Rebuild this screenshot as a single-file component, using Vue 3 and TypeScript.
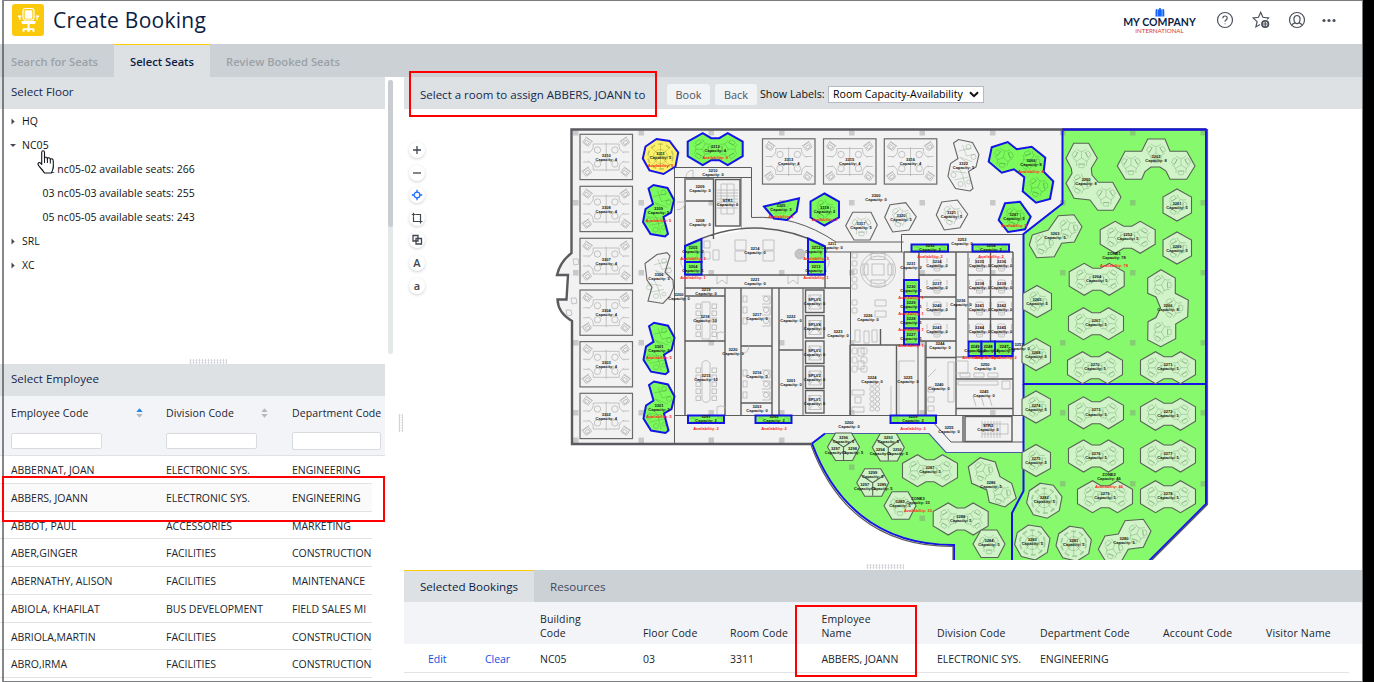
<script setup lang="ts">
interface Label { x: number; y: number; n: string; cap: string; av?: string; zone?: boolean }
type Kind = 'open' | 'free' | 'picked' | 'zoned'
interface Shape { kind: Kind; pts: string }

const tree = [
  { name: 'HQ', open: false, floors: [] as string[] },
  { name: 'NC05', open: true, floors: ['02 nc05-02 available seats: 266', '03 nc05-03 available seats: 255', '05 nc05-05 available seats: 243'] },
  { name: 'SRL', open: false, floors: [] as string[] },
  { name: 'XC', open: false, floors: [] as string[] },
]

const employees = [
  ['ABBERNAT, JOAN', 'ELECTRONIC SYS.', 'ENGINEERING'],
  ['ABBERS, JOANN', 'ELECTRONIC SYS.', 'ENGINEERING'],
  ['ABBOT, PAUL', 'ACCESSORIES', 'MARKETING'],
  ['ABER,GINGER', 'FACILITIES', 'CONSTRUCTION'],
  ['ABERNATHY, ALISON', 'FACILITIES', 'MAINTENANCE'],
  ['ABIOLA, KHAFILAT', 'BUS DEVELOPMENT', 'FIELD SALES MI'],
  ['ABRIOLA,MARTIN', 'FACILITIES', 'CONSTRUCTION'],
  ['ABRO,IRMA', 'FACILITIES', 'CONSTRUCTION'],
]

const bookingCols = ['', '', 'Building Code', 'Floor Code', 'Room Code', 'Employee Name', 'Division Code', 'Department Code', 'Account Code', 'Visitor Name']
const booking = ['Edit', 'Clear', 'NC05', '03', '3311', 'ABBERS, JOANN', 'ELECTRONIC SYS.', 'ENGINEERING', '', '']

/* Room outlines are stored as offsets so that one template serves many rooms. */
const at = (t: number[][], x: number, y: number): string =>
  t.map(p => `${(x + p[0]).toFixed(1)},${(y + p[1]).toFixed(1)}`).join(' ')

const DBL = [[-27.5, -7.5], [-12.5, -16], [-4, -11], [4, -11], [12.5, -16], [27.5, -7.5], [27.5, 7], [12.5, 16], [4, 11], [-4, 11], [-12.5, 16], [-27.5, 7]]
const HEX = [[0, -16], [14.5, -8], [14.5, 8], [0, 16], [-14, 8], [-14, -8]]
const FLAT = [[-8, -14], [8, -14], [16, 0], [9, 13.5], [-8, 13.5], [-16, 0]]
const OCT = [[-4, -17.5], [9, -15.5], [17.7, -4], [15, 10], [3, 17.5], [-11, 14], [-17.7, 2], [-15, -10]]
const BEAN = [[-10, -22], [-5, -25.5], [9, -22.5], [15.5, -10.5], [12.5, 2], [5, 6.5], [9.5, 23.5], [6.5, 26], [-8, 23.5], [-15.5, 11.5], [-13, -1.5], [-5.5, -6.5]]

const dbl: [Kind, number, number, string, string][] = [
  ['free', 715.2, 149.2, '3312', '4'],
  ['zoned', 1127.7, 237.3, '3252', '5'], ['zoned', 1096.7, 279.3, '3264', '5'], ['zoned', 1096, 323.7, '3267', '5'],
  ['zoned', 1095, 367.7, '3270', '5'], ['zoned', 1168, 367.7, '3271', '5'], ['zoned', 1096, 412.8, '3273', '5'],
  ['zoned', 1168, 414.3, '3272', '5'], ['zoned', 1096, 456, '3276', '5'], ['zoned', 1168, 456, '3277', '5'],
  ['zoned', 1105, 496.7, '3279', '5'], ['zoned', 1168, 496.7, '3278', '5'], ['zoned', 930, 470.7, '3287', '5'], ['zoned', 960.7, 519, '3288', '5'],
]
const hex: [Kind, number, number, string, string][] = [
  ['free', 824.5, 209.5, '3318', '2'], ['zoned', 1177, 205, '3261', '5'], ['zoned', 1177, 248, '3269', '5'],
  ['zoned', 1037, 301.5, '3265', '5'], ['zoned', 1036, 354.5, '3268', '5'], ['zoned', 1036, 407, '3274', '5'], ['zoned', 1036, 460.5, '3275', '5'],
]
const flat: [number, number, string][] = [[900, 505.7, '3285'], [989, 544, '3284']]
const split: [number, number, string[]][] = [
  [843.5, 447, ['3296', '3297', '3298']], [888.3, 447.5, ['3293', '3294', '3292']], [872.7, 482.7, ['3299', '3297', '3289']],
]
const oct: [Kind, number, number, string][] = [['picked', 660.5, 156.5, '3311'], ['zoned', 1044.3, 500.7, '3282'], ['zoned', 1032.3, 542.5, '3283'], ['zoned', 1073.7, 543.7, '3281']]
const bean: [Kind, number, number, string, string][] = [
  ['free', 658.5, 210.5, '3309', '5'], ['open', 963.5, 165, '3322', '5'], ['free', 659, 348.2, '3301', '5'], ['free', 659, 407, '3301', '5'],
]
const quads: [number, number, string][] = [
  [606.2, 157, '3310'], [606.2, 209, '3308'], [606.2, 261, '3307'], [606.2, 312.7, '3304'], [606.2, 364.3, '3303'], [606.2, 416, '3302'],
  [788.7, 161.5, '3313'], [849.7, 161.5, '3315'], [910.5, 161.5, '3316'],
]

const custom: Shape[] = [
  { kind: 'open', pts: '645,263.5 657,254.5 667,252.7 670,256 665,272 673,280 673.5,288 670,296 663,303.5 648,301 652,287 647,280' },
  { kind: 'free', pts: '764,206.5 799,198.2 796.7,211.5 787,220 774,218.5' },
  { kind: 'open', pts: '852.7,212.3 871,212.3 877.3,225 870,240 854,240 845.7,225.7' },
  { kind: 'open', pts: '890,204.7 905.7,202.7 916.3,216.7 909,230 892.7,232 884.7,217.3' },
  { kind: 'open', pts: '941.7,202 957.3,200 967.7,214.3 960,227.7 944.3,230 936.3,215' },
  { kind: 'free', pts: '991.7,147.3 1007.7,142 1016.7,149.3 1031.7,146.7 1045.3,157.7 1043.7,171.7 1053.3,181.3 1050,199 1036,202.7 1022.7,191.3 1024.3,177.3 1014,169.3 1001.7,172.7 988.7,161.7' },
  { kind: 'free', pts: '1005,203.3 1020,201.7 1030.7,216.7 1025,229.3 1008,232 998.7,220' },
  { kind: 'zoned', pts: '1073.7,143.3 1088.7,143.3 1097.3,158.3 1091.3,168.3 1092,175 1098.3,182.3 1112.7,182.3 1121,197.3 1113.3,210.3 1097.7,210.3 1090,200 1074,198.3 1066,183.3 1072,173.3 1071.3,168.3 1066,158.3' },
  { kind: 'zoned', pts: '1125,151.3 1141.7,151.3 1147.7,139 1165,139 1170,151.3 1186.7,151.3 1195,166 1186.7,179.3 1170,179.3 1166,171 1160,167 1151,167 1145,171.5 1141.7,179.3 1125.3,179.3 1117.3,166' },
  { kind: 'zoned', pts: '1032.3,235 1048.3,230 1058.3,215.7 1074,214.7 1082,226.7 1074.3,242 1061.7,243.3 1054.3,256.7 1036.7,257.7 1029.3,245' },
  { kind: 'zoned', pts: '1161,269.7 1175.3,278 1175.3,293.3 1188.3,300 1187.7,316.7 1175.7,324 1175.7,338.7 1160.7,346.7 1147.7,340 1148,321.7 1156,317.5 1160.5,308 1156,297 1147.7,293.3 1147.7,278' },
  { kind: 'zoned', pts: '968.3,466.7 980,457.7 995.3,462 1000,476.7 1011.7,483.3 1016.3,498.3 1005,507 989.3,502.3 986.7,490 971.7,483.3' },
  { kind: 'zoned', pts: '1105,536 1118.3,534 1125,520.7 1143.3,519.3 1151,531 1143.3,547.3 1128.3,549.3 1121,562 1106,562 1098.3,549.3' },
  { kind: 'free', pts: '685,246 701.5,239 701.5,262 685,262' },
  { kind: 'free', pts: '808,238.5 825,246.5 825,262 808,262' },
]
const boxes: [number, number, number, number][] = [
  [685, 262, 16.5, 12.5], [808, 262, 17, 12.5],
  [688, 415.5, 36, 7.5], [755.5, 415.5, 36, 7.5], [890.5, 415.5, 45.5, 7.5],
  [911.5, 244.5, 36.5, 7], [972.5, 244.5, 36.5, 7],
  [904, 280, 15, 16], [904, 296, 15, 16], [904, 312, 15, 16.5], [904, 328.5, 15, 16],
  [968.5, 341.5, 13, 14.5], [981.5, 341.5, 13.5, 14.5], [995, 341.5, 17.5, 14.5],
]

const shapes: Shape[] = [
  ...custom,
  ...dbl.map(([kind, x, y]) => ({ kind, pts: at(DBL, x, y) })),
  ...hex.map(([kind, x, y]) => ({ kind, pts: at(HEX, x, y) })),
  ...flat.map(([x, y]) => ({ kind: 'zoned' as Kind, pts: at(FLAT, x, y) })),
  ...split.map(([x, y]) => ({ kind: 'zoned' as Kind, pts: at(FLAT, x, y) })),
  ...oct.map(([kind, x, y]) => ({ kind, pts: at(OCT, x, y) })),
  ...bean.map(([kind, x, y]) => ({ kind, pts: at(BEAN, x, y) })),
]
const rank: Record<Kind, number> = { open: 0, zoned: 1, free: 2, picked: 3 }
shapes.sort((a, b) => rank[a.kind] - rank[b.kind])

/* Furniture clusters of three seats inside irregular rooms: x, y, rotation. */
const pods: [number, number, number][] = [
  [861.5, 226, 0], [900.5, 217, 20], [952, 215, 20], [1014.5, 217, 20], [824.5, 209.5, 30],
  [1003.5, 157.5, 10], [1030, 160.5, 40], [1038, 187, 20],
  [1081.5, 158, 0], [1081, 184, 30], [1106, 196.5, 0],
  [1131, 165, 0], [1156, 153, 0], [1181, 165, 0], [1043.5, 244, 20], [1068, 229, 20],
  [1161.5, 285, 30], [1173, 308, 30], [1161.5, 332, 30],
  [983, 471, 20], [1001, 494, 20], [1113, 549, 20], [1137, 534, 20],
  ...hex.slice(1).map(([, x, y]) => [x, y, 30] as [number, number, number]),
  ...flat.map(([x, y]) => [x, y, 0] as [number, number, number]),
  ...dbl.flatMap(([, x, y]) => [[x - 13, y, 30], [x + 13, y, 90]] as [number, number, number][]),
]

const offices: [number, number][] = []
for (const y of [264, 286, 308, 330]) for (const x of [937, 979.5, 1001.5]) offices.push([x, y])

const pillars: [number, number][] = []
for (const x of [573, 638.5, 708.5, 779, 849, 919.5, 990, 1060, 1130, 1200.5])
  for (const y of [132.5, 202.5, 272.5, 342.5, 412.5]) pillars.push([x, y])
for (const x of [1060, 1130, 1200.5]) pillars.push([x, 483.5])
for (const x of [573, 638.5, 708.5, 779]) pillars.push([x, 440])
pillars.push([849, 467], [919.5, 518])

const lifts = [290, 315.5, 341, 366, 390.5]

const labels: Label[] = [
  ...quads.map(([x, y, n]) => ({ x, y, n, cap: '4' })),
  ...dbl.map(([k, x, y, n, cap]) => ({ x, y: y - 1, n, cap, av: k === 'free' ? '6' : undefined })),
  ...hex.map(([k, x, y, n, cap]) => ({ x, y, n, cap, av: k === 'free' ? '2' : undefined })),
  ...flat.map(([x, y, n]) => ({ x, y: y - 2, n, cap: '5' })),
  ...split.flatMap(([x, y, n]) => [{ x, y: y - 8, n: n[0], cap: '5' }, { x: x - 8, y: y + 3.5, n: n[1], cap: '5' }, { x: x + 9, y: y + 3.5, n: n[2], cap: '5' }]),
  ...oct.map(([k, x, y, n]) => ({ x, y: y - 1, n, cap: '5', av: k === 'picked' ? '5' : undefined })),
  ...bean.map(([k, x, y, n, cap]) => ({ x, y, n, cap, av: k === 'free' ? '5' : undefined })),
  { x: 659, y: 276, n: '3306', cap: '5' }, { x: 781, y: 207, n: '3305', cap: '5', av: '1' },
  { x: 861, y: 225, n: '3317', cap: '5' }, { x: 901, y: 217, n: '3320', cap: '5' }, { x: 951.5, y: 214, n: '3321', cap: '5' },
  { x: 1031, y: 162, n: '3266', cap: '8', av: '8' }, { x: 1014, y: 216, n: '3267', cap: '5', av: '5' },
  { x: 1086, y: 181, n: '3260', cap: '8' }, { x: 1156, y: 158, n: '3262', cap: '8' }, { x: 1055, y: 235, n: '3263', cap: '5' },
  { x: 1168, y: 307, n: '3266', cap: '8' }, { x: 991, y: 484, n: '3286', cap: '5' }, { x: 1124, y: 540, n: '3280', cap: '5' },
  { x: 713, y: 172, n: '3210', cap: '0' }, { x: 700, y: 188, n: '3209', cap: '0' }, { x: 700, y: 222, n: '3208', cap: '0' },
  { x: 727.5, y: 202, n: 'STR1', cap: '0' }, { x: 876, y: 197, n: '3300', cap: '0' }, { x: 832, y: 245.5, n: '3211', cap: '0' },
  { x: 693, y: 249, n: '3205', cap: '2', av: '2' }, { x: 693, y: 268, n: '3204', cap: '1', av: '1' },
  { x: 816, y: 249, n: '3212', cap: '2', av: '2' }, { x: 816, y: 268, n: '3213', cap: '1', av: '1' },
  { x: 755, y: 250, n: '3214', cap: '0' }, { x: 755, y: 281, n: '3221', cap: '0' }, { x: 679, y: 296, n: '3200', cap: '0' },
  { x: 706, y: 291, n: '3219', cap: '0' }, { x: 705, y: 318, n: '3218', cap: '10' }, { x: 706, y: 377, n: '3215', cap: '12' },
  { x: 733, y: 351, n: '3220', cap: '0' }, { x: 757, y: 316, n: '3217', cap: '0' }, { x: 757, y: 374, n: '3216', cap: '0' },
  { x: 757, y: 408, n: '3203', cap: '0' }, { x: 791, y: 318, n: '3222', cap: '0' }, { x: 791, y: 382, n: '3201', cap: '0' },
  ...lifts.map((y, i) => ({ x: 814.5, y: y + 11, n: `SPLV${5 - i}`, cap: '0' })),
  { x: 838, y: 333, n: '3223', cap: '0' }, { x: 868, y: 317, n: '3226', cap: '0' }, { x: 872, y: 379, n: '3224', cap: '0' },
  { x: 908, y: 379, n: '3225', cap: '0' }, { x: 849, y: 424, n: '3200', cap: '0' }, { x: 940, y: 345, n: '3244', cap: '0' },
  { x: 939, y: 386, n: '3240', cap: '0' }, { x: 985, y: 366, n: '3250', cap: '0' }, { x: 984, y: 393, n: '3245', cap: '0' },
  { x: 949, y: 429, n: '3255', cap: '0' }, { x: 988, y: 427, n: 'STR2', cap: '0' }, { x: 961, y: 302, n: '3236', cap: '0' },
  { x: 911, y: 265, n: '3231', cap: '2' }, { x: 962, y: 241.5, n: '3253', cap: '0' }, { x: 1019, y: 346, n: '3251', cap: '0' },
  ...offices.map(([x, y], i) => ({ x, y: y - 1, n: String(3234 + i), cap: '0' })),
  ...[288, 304, 320, 336].map((y, i) => ({ x: 911, y, n: String(3230 - i), cap: '1', av: '1' })),
  { x: 930, y: 247, n: '3232', cap: '2', av: '2' }, { x: 991, y: 247, n: '3254', cap: '2', av: '2' },
  { x: 706, y: 418.5, n: '3291', cap: '2', av: '2' }, { x: 774, y: 418.5, n: '3292', cap: '2', av: '2' }, { x: 913, y: 418.5, n: '3229', cap: '2', av: '2' },
  { x: 975, y: 348, n: '3249', cap: '2', av: '2' }, { x: 988, y: 348, n: '3248', cap: '2', av: '2' }, { x: 1004, y: 348, n: '3247', cap: '2', av: '2' },
  { x: 1114, y: 255.5, n: 'ZONE1', cap: '78', av: '78', zone: true },
  { x: 1109, y: 476.5, n: 'ZONE2', cap: '46', av: '46', zone: true },
  { x: 918, y: 500.5, n: 'ZONE3', cap: '33', av: '33', zone: true },
]

const tools = ['plus', 'minus', 'locate', 'area', 'layers', 'big', 'small']
</script>

<template>
  <div class="screen">
    <div class="app">
      <header class="top">
        <svg class="logo" viewBox="0 0 32 32">
          <rect width="32" height="32" rx="3" fill="#fbc90c" />
          <rect x="11" y="4.500" width="11" height="11.500" rx="2.500" fill="none" stroke="#fff" stroke-width="1.200" />
          <rect x="12.700" y="6.300" width="7.600" height="8.500" rx="1.200" fill="#fff" />
          <path d="M6 11.500h3.300v1.300h-.8v3.200H7.300v-2.700H6zM27 11.500h-3.300v1.300h.8v3.200h1.200v-2.700H27z" fill="#fff" />
          <path d="M9.500 17h14v2.200l-1 .8H10.500l-1-.8z" fill="#fff" />
          <path d="M15.500 20h2v4.300h4l1 1v2.500h-2V26h-2.700v1.800h-2.600V26h-2.700v1.800h-2v-2.500l1-1h4z" fill="#fff" />
        </svg>
        <h1>Create Booking</h1>
        <div class="brand">
          <svg width="10" height="9" viewBox="0 0 10 9">
            <path d="M.500 2.500h2V8.500h-2zM3 1.500h3.800v7H3zM7.300 2.500h2v6h-2z" fill="#1463ff" />
            <circle cx="5" cy="1.100" r="1.100" fill="#1463ff" /><circle cx="1.700" cy="2" r="1" fill="#1463ff" /><circle cx="8.200" cy="2" r="1" fill="#1463ff" />
            <path d="M2.700 3v5.500M7.100 3v5.500" stroke="#4f86ff" stroke-width=".5" />
          </svg>
          <b>MY COMPANY</b>
          <span>INTERNATIONAL</span>
        </div>
        <nav class="icons">
          <svg viewBox="0 0 18 18"><circle cx="9" cy="9" r="7.500" /><path d="M6.800 7.300Q6.800 5 9 5t2.200 2q0 1.200-1.200 2-1 .700-1 1.800" /><circle cx="9" cy="12.800" r=".5" class="dot" /></svg>
          <svg viewBox="0 0 18 18"><path d="M15.300 8.300l1.200-1.400-5.600-.6L8.700 1.300 6.500 6.300l-5.400.6 4 3.700-1.200 5.300 4.100-2.300" /><circle cx="13.200" cy="13" r="3.200" stroke-width="1.800" /><path d="M13.200 11v4M11.200 13h4" stroke-width="1.200" /></svg>
          <svg viewBox="0 0 18 18"><circle cx="9" cy="9" r="7.500" /><path d="M4 14.200q.5-1.700 3-2.400Q5.800 10 5.900 7.700 6.200 4.500 9 4.500t3.100 3.200Q12.200 10 11 11.800q2.500.7 3 2.400M7 11.800q2 1.800 4 0" /></svg>
          <svg viewBox="0 0 18 18"><circle cx="4" cy="9.500" r="1.600" class="dot" /><circle cx="9" cy="9.500" r="1.600" class="dot" /><circle cx="14" cy="9.500" r="1.600" class="dot" /></svg>
        </nav>
      </header>

      <div class="tabs">
        <div class="tab first">Search for Seats</div>
        <div class="tab active">Select Seats</div>
        <div class="tab last">Review Booked Seats</div>
      </div>

      <main class="body">
        <section class="left">
          <div class="floors">
            <div class="floors-main">
              <div class="bar">Select Floor</div>
              <ul class="tree">
                <template v-for="b in tree" :key="b.name">
                  <li class="node">
                    <svg width="7" height="7" viewBox="0 0 7 7"><path :d="b.open ? 'M0 2h6L3 5z' : 'M1.500.5v6l3.200-3z'" fill="#444b55" /></svg>
                    {{ b.name }}
                  </li>
                  <li v-for="f in b.floors" :key="f" class="leaf">{{ f }}</li>
                </template>
              </ul>
            </div>
            <div class="scroll"><div class="thumb"></div></div>
          </div>
          <div class="grip-row"><i class="grip h"></i></div>
          <div class="emp">
            <div class="bar">Select Employee</div>
            <div class="emp-head">
              <div>
                <span class="cap">Employee Code
                  <svg class="sort" width="7" height="10" viewBox="0 0 7 10"><path d="M.3 4L3.500.3 6.700 4z" fill="#1e88ee" /><path d="M.3 6L3.500 9.700 6.700 6z" fill="#b5b9be" /></svg>
                </span>
                <input class="filter" type="text" />
              </div>
              <div>
                <span class="cap">Division Code
                  <svg class="sort two" width="7" height="10" viewBox="0 0 7 10"><path d="M.3 4L3.500.3 6.700 4z" fill="#b5b9be" /><path d="M.3 6L3.500 9.700 6.700 6z" fill="#b5b9be" /></svg>
                </span>
                <input class="filter" type="text" />
              </div>
              <div>
                <span class="cap">Department Code</span>
                <input class="filter tall" type="text" />
              </div>
            </div>
            <div class="rows">
              <div v-for="(e, i) in employees" :key="e[0]" class="row" :class="{ hover: i === 1 }">
                <span v-for="c in e" :key="c">{{ c }}</span>
              </div>
            </div>
          </div>
        </section>

        <div class="divider"><i class="grip v"></i></div>

        <section class="right">
          <div class="bar tools-bar">
            <span class="prompt">Select a room to assign ABBERS, JOANN to</span>
            <button>Book</button>
            <button>Back</button>
            <label>Show Labels:</label>
            <div class="select">
              <span>Room Capacity-Availability</span>
              <svg width="10" height="7" viewBox="0 0 10 7"><path d="M1 1.200L5 5.200 9 1.200" fill="none" stroke="#111" stroke-width="2" /></svg>
            </div>
          </div>

          <div class="map">
            <div class="zoomers">
              <div v-for="t in tools" :key="t" class="zoomer">
                <svg v-if="t === 'plus'" viewBox="0 0 12 12"><path d="M6 2v8M2 6h8" /></svg>
                <svg v-else-if="t === 'minus'" viewBox="0 0 12 12"><path d="M2 6h8" /></svg>
                <svg v-else-if="t === 'locate'" viewBox="0 0 12 12" class="blue"><circle cx="6" cy="6" r="2.900" /><path d="M6 .8v2.500M6 8.700v2.500M.8 6h2.500M8.700 6h2.500" /></svg>
                <svg v-else-if="t === 'area'" viewBox="0 0 12 12"><path d="M2.500 4.200V9.500H8M4.200 2.500H9.500V8M.800 2.500H4M2.500.8V4M8 9.500h3.500M9.500 7.500v4" stroke-width="1.200" /></svg>
                <svg v-else-if="t === 'layers'" viewBox="0 0 12 12"><path d="M2 1.500h5v5.500H2zM5 4.500h5.500V10H5z" stroke-width="1.300" /></svg>
                <b v-else>{{ t === 'big' ? 'A' : 'a' }}</b>
              </div>
            </div>
            <svg class="plan" viewBox="404 109 958 451" width="958" height="451">
              <defs>
                <g id="quad">
                  <rect x="-26.200" y="-22.700" width="52.500" height="45.300" class="room" />
                  <path d="M0-14.500V14.500M-13-13H13M-13 13H13M-13-13Q-12-7-18-4M13-13Q12-7 18-4M-13 13Q-12 7-18 4M13 13Q12 7 18 4M-23-5h6M-23 5h6M17-5h6M17 5h6" />
                  <g v-for="s in [[-1, -1], [1, -1], [-1, 1], [1, 1]]" :key="s.join()">
                    <circle :cx="8.700 * s[0]" :cy="7 * s[1]" r="3.200" />
                    <g :transform="`translate(${19 * s[0]} ${15 * s[1]}) rotate(${35 * s[0] * s[1]})`"><rect x="-3.500" y="-3" width="7" height="6" rx="1" /><path d="M-4.500-3.500h9M-2-1h4v3h-4z" /></g>
                  </g>
                </g>
                <g id="pod">
                  <path d="M0 0V-6M0 0L5.500 3.500M0 0L-5.500 3.500M-5-9Q0-4 5-9M9 0Q4 2 5 8M-9 0Q-4 2-5 8" />
                  <g v-for="a in [60, 180, 300]" :key="a" :transform="`rotate(${a}) translate(0 -8)`"><rect x="-2.700" y="-1.700" width="5.400" height="3.600" rx="1.200" /><path d="M-3.500 2h7" /></g>
                </g>
                <g id="wheel">
                  <path d="M0-12V12M-12 0H12M-9-9L9 9M-9 9L9-9" />
                  <circle r="7" /><circle r="12.500" stroke-dasharray="5 3" stroke-width="1.600" />
                </g>
                <g id="wave">
                  <path d="M-5-14L8-17M-4-8L9-3M-1-20L3-9L12-11M-12 6L3 8M-9 15L5 12M-5 2L-1 10L2 22M4-2L-3-7" />
                  <circle cx="5" cy="-18" r="2.500" /><circle cx="10" cy="-8" r="2.500" /><circle cx="-10" cy="10" r="2.500" /><circle cx="-3" cy="19" r="2.500" /><circle cx="5" cy="17" r="2" />
                </g>
                <g id="desk"><path d="M-10 3H-4Q0 7 4 3H10M-10-6v5M10-6v5" /><rect x="-4" y="-6" width="8" height="7" rx="2" /><rect x="-3" y="3" width="6" height="4" rx="1" /></g>
              </defs>

              <path class="slab" d="M571.500 129.500H1206V504L1148 562H954V545C875 545 833 500 812 444H572V321Q558 313 557.500 299.500H566.500L568 275H557Q560 262 571.500 253Z" />
              <path class="zone-fill" d="M1062 129.500H1206V504L1148 562H954V545C875 545 833 500 812 443.500L825 433.500H929L946 452.500H1023.500V234L1062 203.500Z" />
              <rect v-for="(p, i) in pillars" :key="i" :x="p[0]" :y="p[1] - 2.500" width="5.500" height="5.500" class="pillar" />

              <g class="wall thin">
                <path d="M674.500 167.500H751.500V217.500Q796 215 836 242H903.500M674.500 167.500V444M674.500 177.500H751.500M825 252H903.500M901.500 252V234.500H1023M674.500 415.500H1023.500M927 415.500L951 442H1023.500M803 288V415M741 178V228M968 253V341M956 357H1013M918 345V415M850.500 252V415M925 345V415" />
              </g>
              <path d="M713.500 226H741V231Q725 233 713.500 237Z" fill="#fff" />
              <g class="wall">
                <path d="M685 178V415M685 246Q755 210 825 246V275H685M686 179H713.500V239M686 201H713.500M685 288H850M725 288V415M685 296H725M685 341H725M741 288V415M772 288V415M741 346H772M741 403H772M779 288V415M779 350H803M825 288V252M850 345H920M850 345V415M896.500 345V415M904 252V345M919 252V341M956 252V415M926 341V415M919 341H956M926 357.500H956M1013 252V415M990.500 252V341M904 252H1013M919 275H956M919 297H956M919 319H956M968 275H1013M968 297H1013M968 319H1013M956 379H1013M956 408.500H1013M880.500 329V345M963 415V442" />
                <rect x="715.500" y="179.500" width="24.500" height="46.500" /><rect x="965" y="416.500" width="47" height="25" />
                <rect v-for="y in lifts" :key="y" x="805.500" :y="y" width="18.500" height="22.500" />
              </g>

              <g class="furn">
                <use v-for="q in quads" :key="`${q[0]}-${q[1]}`" href="#quad" :x="q[0]" :y="q[1]" />
                <path d="M717 190H738M717 193H738M717 196H738M717 199H738M717 202H738M717 205H738M717 208H738M721 184H734V214H721ZM727 184V214M982 421V438M985 421V438M988 421V438M991 421V438M994 421V438M997 421V438M1000 421V438M982 424H1008V434H982" />
                <g v-for="y in lifts" :key="y"><rect x="809" :y="y + 5" width="12" height="14" /><path :d="`M809 ${y + 5}l12 14m0-14l-12 14`" /></g>
                <path d="M735 240h11v10h-11zM735 251h11v10h-11zM763 240h11v10h-11zM763 251h11v10h-11zM702 302h8v37h-8zM702 363q4-5 8 0v37q-4 5-8 0zM858 348h6v8h-6zM858 361h6v8h-6z" />
                <g v-for="y in [304, 311, 318, 325, 332, 368, 375, 382, 389, 396]" :key="y"><rect x="696" :y="y" width="4.500" height="4.500" /><rect x="712" :y="y" width="4.500" height="4.500" /></g>
                <g v-for="y in [296, 307, 318, 370, 381, 392]" :key="y"><rect x="743" :y="y" width="4" height="6" /><circle cx="766" :cy="y + 3" r="2.600" /><path :d="`M762 ${y}h8v8h-8`" /></g>
                <circle cx="878" cy="270" r="17.500" /><circle cx="878" cy="270" r="14" /><rect x="872" y="264" width="12" height="11" />
                <rect x="871" y="253.500" width="14" height="6" /><rect x="871" y="280" width="14" height="6" /><rect x="863" y="264" width="5" height="11" /><rect x="888" y="264" width="5" height="11" />
                <g v-for="y in [253, 261, 269, 277, 284, 300, 308]" :key="y"><rect x="852" :y="y" width="5" height="5" rx="1" /></g>
                <g v-for="y in [348, 357, 366]" :key="y"><rect x="852" :y="y" width="5" height="6" rx="1.500" /><rect x="861" :y="y" width="6" height="6" rx="1.500" /></g>
                <g v-for="y in [384, 389, 394, 399, 404, 409]" :key="y"><circle cx="872" :cy="y" r="2.200" /><circle cx="877.500" :cy="y" r="2.200" /></g>
                <path d="M852 390h12v5h-12zM852 407h12v5h-12zM855 397h6v6h-6zM855 330h5v12h-5zM864 331h5v12h-5zM872 330h5v12h-5zM875 300h11v6h-11zM875 311h11v6h-11zM899 361h16M899 361v54M891 386v28M956 361h12v12h-12M928 377l8-8M928 387h6v5h-6zM928 397h6v5h-6zM928 406h6v5h-6zM948 362h6v40h-6zM973 396l3 10M981 396l3 10M989 396l3 10M958 381h40v4h-40zM1002 381h8v8h-8zM960 373h10v4h-10zM974 373h10v4h-10zM988 373h10v4h-10z" />
                <circle cx="800" cy="254" r="5" fill="#c4c4c4" />
                <path d="M704 241h6v7h-6zM704 252h6v7h-6zM713 250h6v10h-6zM717 276v8l5-4 5 4v-8M788 276v8l5-4 5 4v-8" />
                <path d="M685 255a8 8 0 0 0 0 14M825 255a8 8 0 0 1 0 14M677 202h8a8 8 0 0 1-8 8M693 177v-7a7 7 0 0 0-7 7M573 259l5 0 1 5-5 1zM571 298l5 0 1 5-5 1zM566 310l5 0 1 5-5 1zM717 341v-8a8 8 0 0 1 8 0M741 354a8 8 0 0 0 8-8M717 415v-8a8 8 0 0 1 8 0" />
                <use v-for="o in offices" :key="`${o[0]}-${o[1]}`" href="#desk" :x="o[0]" :y="o[1]" />
              </g>

              <g class="zone">
                <path d="M1062.500 129.500H1206V384H1023.500V234L1062.500 203.500Z" />
                <path d="M1206 384V504L1148 562H1012V513L1023.500 491V384" />
                <path d="M812 443.500C833 500 875 545 954 545V562M812 443.500L825 433.500" />
                <path d="M825 433.500H929L946 452.500H1023.500" class="faint" />
              </g>

              <polygon v-for="(s, i) in shapes" :key="i" :points="s.pts" :class="s.kind" />
              <rect v-for="(b, i) in boxes" :key="i" :x="b[0]" :y="b[1]" :width="b[2]" :height="b[3]" class="free" />
              <path v-for="s in split" :key="s[0]" class="zoned" :d="`M${s[0]} ${s[1] + 13}V${s[1]}L${s[0] - 12} ${s[1] - 8}M${s[0]} ${s[1]}L${s[0] + 12} ${s[1] - 8}`" />
              <g class="tint">
                <use v-for="(p, i) in pods" :key="i" href="#pod" :transform="`translate(${p[0]} ${p[1]}) rotate(${p[2]})`" />
                <use v-for="o in oct" :key="o[3]" href="#wheel" :x="o[1]" :y="o[2]" />
                <use v-for="b in bean" :key="`${b[1]}-${b[2]}`" href="#wave" :x="b[1]" :y="b[2]" />
                <use href="#wave" transform="translate(659 278) scale(1 .95)" />
                <path d="M770 208l10 3 4-9M784 212l6-9M774 213h12M690 418h5v4h-5M717 418h5v4h-5M758 418h5v4h-5M784 418h5v4h-5M893 418h5v4h-5M914 247h5v3h-5M940 247h5v3h-5M975 247h5v3h-5M1001 247h5v3h-5M688 246h9v12h-9M812 246h9v12h-9M907 283h9v10h-9zM907 299h9v10h-9zM907 315h9v10h-9zM907 332h9v10h-9zM972 345h7v8h-7zM985 345h7v8h-7zM999 345h10v8h-10z" />
              </g>

              <g class="outer">
                <path d="M1206 129.500H571.500V253Q560 262 557 275H568L566.500 299.500H557.500Q558 313 572 321V444H812" />
                <path d="M1207.500 129V504.500L1150 562M811 445C832 502 874 547 953 546.500V562" class="edge" />
              </g>
              <path class="zone" d="M1062.500 129.500H1206" />

              <g class="labels">
                <g v-for="(l, i) in labels" :key="i">
                  <text :x="l.x" :y="l.y - .5">{{ l.n }}</text>
                  <text :x="l.x" :y="l.y + 3.700">Capacity: {{ l.cap }}</text>
                  <text v-if="l.av" :x="l.x" :y="l.y + (l.zone ? 11.500 : 11)" class="av">Availability: {{ l.av }}</text>
                </g>
              </g>
            </svg>
          </div>

          <div class="grip-row low"><i class="grip h"></i></div>

          <div class="bookings">
            <div class="subtabs"><div class="subtab on">Selected Bookings</div><div class="subtab">Resources</div></div>
            <div class="brow bhead"><span v-for="(c, i) in bookingCols" :key="i">{{ c }}</span></div>
            <div class="brow bdata"><span v-for="(c, i) in booking" :key="i" :class="{ link: i < 2 }">{{ c }}</span></div>
          </div>
        </section>
      </main>
    </div>

    <div class="frame"></div>
    <div class="mark m1"></div>
    <div class="mark m2"></div>
    <div class="mark m3"></div>
    <svg class="cursor" width="18" height="24" viewBox="0 0 18 24">
      <path d="M4.700 13V2.500Q4.700.8 6.100.8T7.500 2.500V9Q7.600 7 9 7t1.400 2.200Q10.600 7.500 12 7.700t1.300 2.200Q13.600 8.500 15 8.800t1.300 2.700V16Q16.200 20 14.300 23H7.500Q5.500 20 2.700 17L1 14.600Q.7 13 2 12.600T4.700 14.500Z" fill="#fff" stroke="#10131c" stroke-width="1.100" stroke-linejoin="round" />
      <path d="M7.500 8.500v4.500M10.400 9v4M13.300 10v3.500" stroke="#10131c" stroke-width="1" />
    </svg>
  </div>
</template>

<style>
body { margin: 0; }
</style>

<style scoped>
* { box-sizing: border-box; }
.screen { position: relative; width: 1374px; height: 682px; background: #000; overflow: hidden; font-family: "Open Sans", "Noto Sans", sans-serif; font-size: 10.5px; color: #111; }
.app { width: 1362px; height: 682px; background: #fff; display: flex; flex-direction: column; }
.frame { position: absolute; left: 2px; top: 0; width: 1361px; height: 682px; border: 1px solid #7b7c7e; border-left: 2px solid rgba(60, 62, 64, .62); pointer-events: none; }
.top { height: 44px; flex: none; display: flex; align-items: flex-start; }
.logo { width: 32px; height: 32px; margin: 4px 0 0 12px; flex: none; }
h1 { margin: 5px 0 0 9px; font-size: 21px; line-height: 30px; font-weight: 400; color: #0b1d45; letter-spacing: .26px; flex: 1; white-space: nowrap; }
.brand { width: 74px; margin: 8px 19.5px 0 0; display: flex; flex-direction: column; align-items: center; white-space: nowrap; }
.brand b { font: 700 10.5px/10px Lato, sans-serif; color: #0b1d45; letter-spacing: .05px; }
.brand span { font: 400 6.2px/7px Lato, sans-serif; color: #d8402f; }
.icons { display: flex; gap: 18px; margin: 11px 24px 0 0; }
.icons svg { width: 18px; height: 18px; fill: none; stroke: #4c525c; stroke-width: 1.2; }
.icons svg:last-child { margin-left: -4px; }
.icons .dot { fill: #4c525c; stroke: none; }
.tabs { height: 33px; flex: none; display: flex; background: #ccd1d5; font-size: 11.2px; font-weight: 600; line-height: 35px; white-space: nowrap; }
.tab { color: #9ba1a7; }
.tab.first { width: 114px; padding-left: 11px; }
.tab.active { width: 96px; background: #dde1e4; color: #0b1d45; border-top: 1px solid #fc0; text-align: center; line-height: 33px; }
.tab.last { padding-left: 16px; }
.body { flex: 1; display: flex; min-height: 0; }
.bar { height: 32px; flex: none; background: #dde1e4; color: #14284f; font-size: 11.6px; font-weight: 500; line-height: 29px; padding-left: 11px; }
.left { width: 393px; display: flex; flex-direction: column; }
.floors { height: 277px; display: flex; gap: 3px; }
.floors-main { width: 385px; }
.scroll { width: 5px; height: 274px; margin-top: 3px; background: #e5e8e9; border-radius: 3px; }
.thumb { height: 147px; background: #c9cdd2; border-radius: 3px; }
.tree { list-style: none; margin: 0; padding: 0; font-weight: 500; letter-spacing: .04px; }
.tree li { height: 24px; line-height: 24px; display: flex; align-items: center; }
.node { padding-left: 10px; gap: 5px; }
.tree li.leaf { padding-left: 42.5px; }
.grip-row { height: 10px; flex: none; padding: 5px 0 0 189px; }
.grip { display: block; background-image: radial-gradient(circle, #d3d6d9 .9px, transparent 1.1px); background-size: 3px 2.500px; }
.grip.h { width: 38px; height: 5px; }
.grip.v { width: 5px; height: 18px; }
.emp { flex: 1; display: flex; flex-direction: column; }
.emp .bar { width: 385px; }
.emp-head { width: 385px; height: 60px; flex: none; background: #f2f4f7; border-bottom: 1px solid #dfe2e5; display: grid; grid-template-columns: 155px 126px 1fr; padding-left: 11px; color: #1c2333; font-weight: 500; letter-spacing: .12px; }
.emp-head > div { display: flex; flex-direction: column; }
.cap { display: flex; align-items: center; height: 20px; margin-top: 7px; white-space: nowrap; }
.sort { margin-left: auto; margin-right: 23px; }
.sort.two { margin-right: 24px; }
.filter { width: 91px; height: 16px; margin: 10px 0 0; padding: 0; border: 1px solid #d8dcdf; border-radius: 2px; background: #fff; }
.filter.tall { width: 89px; height: 18px; margin-top: 9px; }
.rows { width: 372px; }
.row { height: 27.75px; display: grid; grid-template-columns: 155px 126px 1fr; padding-left: 11px; border-bottom: 1px solid #e1e3e5; line-height: 28px; white-space: nowrap; color: #20242c; letter-spacing: -.03px; }
.row.hover { background: #fafafa; }
.divider { width: 11px; flex: none; padding: 337px 0 0 5px; }
.right { flex: 1; display: flex; flex-direction: column; min-width: 0; }
.tools-bar { display: flex; align-items: center; padding: 2px 0 0 16px; white-space: nowrap; }
.prompt { width: 247px; line-height: 32px; font-size: 11.5px; font-weight: 400; padding-top: 1px; }
button { width: 43px; height: 21px; margin: 0 5px 0 0; padding: 0; border: 0; border-radius: 3px; background: #f1f3f5; color: #4b5360; font: 500 10.9px/19px "Open Sans", sans-serif; }
button + button { width: 42px; margin-right: 3px; }
label { width: 68px; color: #111; font-size: 10.7px; }
.select { width: 156px; height: 17px; border: 1px solid #b6b9c4; background: #fff; display: flex; align-items: center; justify-content: space-between; padding: 0 4px; font-size: 10.6px; color: #000; }
.map { height: 451px; flex: none; position: relative; }
.plan { display: block; }
.zoomers { position: absolute; left: 5px; top: 33px; display: flex; flex-direction: column; gap: 6.6px; }
.zoomer { width: 16px; height: 16px; border-radius: 50%; background: #fff; box-shadow: 0 1px 3px rgba(40, 50, 60, .22); display: flex; align-items: center; justify-content: center; color: #3f4650; }
.zoomer svg { width: 12px; height: 12px; fill: none; stroke: #3f4650; stroke-width: 1.3; }
.zoomer svg.blue { stroke: #1f6fff; }
.zoomer b { font-size: 11px; line-height: 14px; font-weight: 600; }
.grip-row.low { padding: 4px 0 0 462px; }
.subtabs { height: 32px; display: flex; background: #ccd1d5; font-size: 11.6px; line-height: 33px; font-weight: 500; color: #3c4a63; }
.subtab { padding-left: 16px; }
.subtab.on { width: 130px; background: #dde1e4; border-top: 1px solid #fc0; color: #0b1d45; line-height: 31px; }
.brow { display: grid; grid-template-columns: 57px 55px 103px 87px 91px 116px 103px 123px 103px 1fr; padding-left: 24px; white-space: nowrap; color: #20242c; }
.bhead { height: 42px; background: #f2f4f7; align-items: end; line-height: 14px; padding-bottom: 4px; font-weight: 500; letter-spacing: .15px; }
.bhead span:nth-child(3), .bhead span:nth-child(6) { width: 54px; white-space: normal; }
.bhead span:nth-child(6), .bdata span:nth-child(6) { margin-left: .5px; }
.bdata { width: 945px; height: 29px; line-height: 31px; border-bottom: 1px solid #e1e3e5; letter-spacing: -.03px; }
.link { color: #1450e0; line-height: 30px; }
.mark { position: absolute; border: 2px solid #f00; }
.m1 { left: 409px; top: 71px; width: 248px; height: 46px; }
.m2 { left: 2px; top: 476px; width: 383px; height: 46px; }
.m3 { left: 795px; top: 605px; width: 122px; height: 72px; }
.cursor { position: absolute; left: 37px; top: 150px; }

.slab { fill: #f2f2f2; }
.zone-fill { fill: #87f96c; }
.pillar { fill: #808080; fill-opacity: .36; }
.room { fill: #f2f2f2; stroke: #6a6a6a; stroke-width: 1.2; }
.wall { fill: none; stroke: #5c5c5c; stroke-width: 1.4; }
.wall.thin { stroke-width: 1; }
.furn { fill: none; stroke: #b6b6b6; stroke-width: .8; }
.tint { fill: none; stroke: #1c5a1c; stroke-opacity: .26; stroke-width: .8; }
.open { fill: #f2f2f2; stroke: #666; stroke-width: 1.1; }
.zoned { fill: #d0f3c8; stroke: #586455; stroke-width: 1.1; }
.free { fill: #7cfa5c; stroke: #1414e6; stroke-width: 2; }
.picked { fill: #fff06a; stroke: #1414e6; stroke-width: 2; }
.zone { fill: none; stroke: #1414e6; stroke-width: 2; }
.zone .faint { stroke: #4a5ca8; stroke-width: 1.2; }
.outer { fill: none; stroke: #5a5a5f; stroke-width: 2.4; }
.outer .edge { stroke-width: 1.2; }
.labels { font: 700 4px "Liberation Sans", sans-serif; text-anchor: middle; fill: #111; }
.labels .av { fill: #ff1a1a; font-size: 4px; }
</style>
